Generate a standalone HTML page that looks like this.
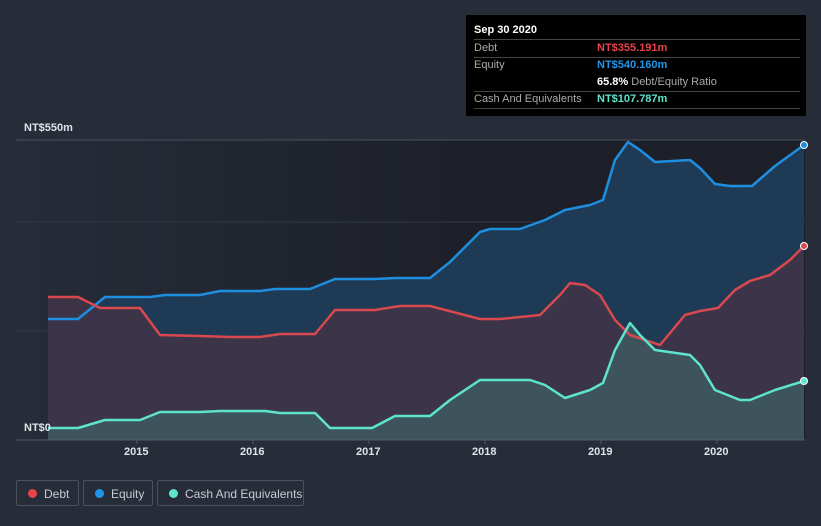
<!DOCTYPE html>
<html><head><meta charset="utf-8"><style>
body{margin:0;width:821px;height:526px;background:#262c38;font-family:"Liberation Sans",sans-serif;overflow:hidden;position:relative}
.tt{position:absolute;left:466px;top:15px;width:340px;height:101px;background:#000;color:#fff;font-size:11px}
.tt .r{position:absolute;left:8px;right:6px;height:17px;border-bottom:1px solid #444;line-height:17px}
.lab{color:#aaa}
.v{position:absolute;left:123px;font-weight:bold}
.leg{position:absolute;top:480px;height:26px;border:1px solid #4a505c;border-radius:2px;color:#c8ccd2;font-size:12px;line-height:26px;box-sizing:border-box}
.leg i{position:absolute;left:11px;top:8px;width:9px;height:9px;border-radius:50%}
.leg span{position:absolute;left:27px}
.ax{position:absolute;color:#dfe2e6;font-size:11px;font-weight:bold}
</style></head><body>
<svg width="821" height="526" style="position:absolute;left:0;top:0">
<defs>
<linearGradient id="bg" x1="16" y1="0" x2="460" y2="0" gradientUnits="userSpaceOnUse"><stop offset="0" stop-color="#262c38"/><stop offset="1" stop-color="#1d2029"/></linearGradient>
</defs>
<rect x="16" y="140" width="789" height="300" fill="url(#bg)"/>
<line x1="16" y1="140" x2="805" y2="140" stroke="#4a505b"/>
<line x1="16" y1="222" x2="805" y2="222" stroke="#323844"/>
<line x1="16" y1="331" x2="805" y2="331" stroke="#323844"/>
<path d="M48,319 L78,319 105,297 150,297 165,295 200,295 220,291 260,291 275,289 310,289 335,279 375,279 395,278 430,278 450,262 480,232 490,229 520,229 545,220 565,210 590,205 603,200 615,160 628,142 640,150 655,162 690,160 700,168 715,184 730,186 752,186 775,166 804,145 L804,440 L48,440Z" fill="#1e3a55"/>
<path d="M48,297 L78,297 100,308 140,308 160,335 200,336 230,337 260,337 280,334 315,334 335,310 375,310 400,306 430,306 480,319 500,319 540,315 560,295 570,283 585,285 600,295 615,320 630,335 660,345 685,315 700,311 718,308 735,290 750,281 770,275 790,260 804,246 L804,440 L48,440Z" fill="#3f3447" fill-opacity="0.9"/>
<path d="M48,428 L78,428 105,420 140,420 160,412 200,412 220,411 265,411 280,413 315,413 330,428 372,428 395,416 430,416 450,400 480,380 530,380 545,385 565,398 590,390 603,383 615,350 630,323 640,335 655,350 690,355 700,365 715,390 740,400 750,400 775,390 804,381 L804,440 L48,440Z" fill="#3d5a62" fill-opacity="0.85"/>
<g fill="none" stroke-width="2.5" stroke-linejoin="round">
<polyline stroke="#1e8fe0" points="48,319 78,319 105,297 150,297 165,295 200,295 220,291 260,291 275,289 310,289 335,279 375,279 395,278 430,278 450,262 480,232 490,229 520,229 545,220 565,210 590,205 603,200 615,160 628,142 640,150 655,162 690,160 700,168 715,184 730,186 752,186 775,166 804,145"/>
<polyline stroke="#d9484f" points="48,297 78,297 100,308 140,308 160,335 200,336 230,337 260,337 280,334 315,334 335,310 375,310 400,306 430,306 480,319 500,319 540,315 560,295 570,283 585,285 600,295 615,320 630,335 660,345 685,315 700,311 718,308 735,290 750,281 770,275 790,260 804,246"/>
<polyline stroke="#5ee3cc" points="48,428 78,428 105,420 140,420 160,412 200,412 220,411 265,411 280,413 315,413 330,428 372,428 395,416 430,416 450,400 480,380 530,380 545,385 565,398 590,390 603,383 615,350 630,323 640,335 655,350 690,355 700,365 715,390 740,400 750,400 775,390 804,381"/>
</g>
<circle cx="804" cy="145" r="3.5" fill="#1e8fe0" stroke="#fff"/>
<circle cx="804" cy="246" r="3.5" fill="#d9484f" stroke="#fff"/>
<circle cx="804" cy="381" r="3.5" fill="#5ee3cc" stroke="#fff"/>
<line x1="16" y1="440" x2="805" y2="440" stroke="#555b66"/>
<g stroke="#555b66"><line x1="137" y1="440" x2="137" y2="444"/><line x1="253" y1="440" x2="253" y2="444"/><line x1="369" y1="440" x2="369" y2="444"/><line x1="485" y1="440" x2="485" y2="444"/><line x1="601" y1="440" x2="601" y2="444"/><line x1="717" y1="440" x2="717" y2="444"/></g>
</svg>
<div class="ax" style="left:24px;top:122px">NT$550m</div>
<div class="ax" style="left:24px;top:422px">NT$0</div>
<div class="ax" style="left:124px;top:446px">2015</div>
<div class="ax" style="left:240px;top:446px">2016</div>
<div class="ax" style="left:356px;top:446px">2017</div>
<div class="ax" style="left:472px;top:446px">2018</div>
<div class="ax" style="left:588px;top:446px">2019</div>
<div class="ax" style="left:704px;top:446px">2020</div>
<div class="tt">
<div class="r" style="top:7px;font-weight:bold">Sep 30 2020</div>
<div class="r" style="top:25px"><span class="lab">Debt</span><span class="v" style="color:#e8434b">NT$355.191m</span></div>
<div class="r" style="top:42px;border:none"><span class="lab">Equity</span><span class="v" style="color:#2196e8">NT$540.160m</span></div>
<div class="r" style="top:59px"><span class="v" style="left:123px">65.8% <span style="color:#aaa;font-weight:normal">Debt/Equity Ratio</span></span></div>
<div class="r" style="top:76px"><span class="lab">Cash And Equivalents</span><span class="v" style="color:#5ee3cc">NT$107.787m</span></div>
</div>
<div class="leg" style="left:16px;width:63px"><i style="background:#e8434b"></i><span>Debt</span></div>
<div class="leg" style="left:83px;width:70px"><i style="background:#2196e8"></i><span>Equity</span></div>
<div class="leg" style="left:157px;width:147px"><i style="background:#5ee3cc"></i><span>Cash And Equivalents</span></div>
</body></html>
